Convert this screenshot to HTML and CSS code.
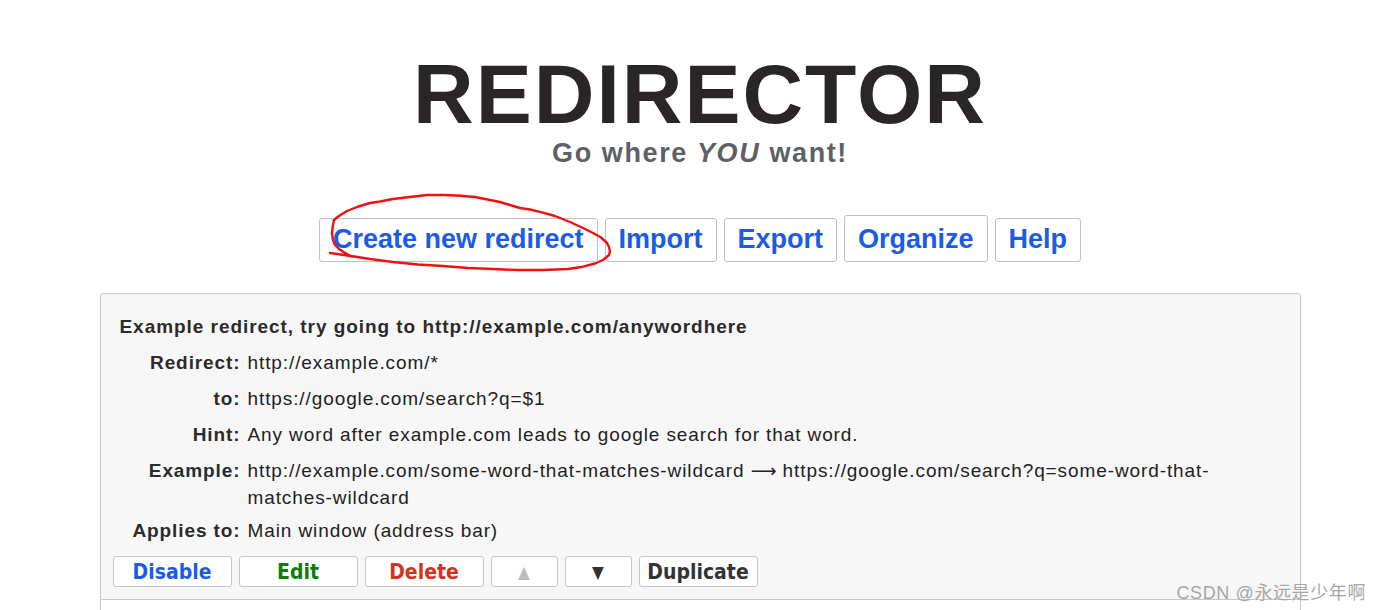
FILE: index.html
```html
<!DOCTYPE html>
<html lang="en">
<head>
	<meta charset="UTF-8">
	<title>Redirector</title>
	<link rel="stylesheet" href="styles.css">
</head>
<body>
	<header class="masthead">
		<h1 class="logo">REDIRECTOR</h1>
		<p class="tagline">Go where <em>YOU</em> want!</p>
	</header>

	<nav class="menu">
		<button class="menu-btn">Create new redirect</button>
		<button class="menu-btn">Import</button>
		<button class="menu-btn">Export</button>
		<button class="menu-btn menu-btn-raised">Organize</button>
		<button class="menu-btn">Help</button>
		<svg class="scribble" width="300" height="90" viewBox="0 0 300 90">
			<path d="M5,63 L26,66 45,69 68,72 93,74.5 118,76 143,78 168,79 193,80 218,80 243,79 258,76.7 270,73.5 278,70 284,65 285,61.7 284,57 282,53 276,47.5 268,43 258,38 245,32 230,26 218,22.7 205,19.5 195,18 185,15 175,12 165,10 150,7 135,5.7 120,5 102,5 85,7 68,9 55,11.5 45,13 32,17 22,21 14,26 9,30 8,35 7,43 8,50 10,55 14,59 18,61.7 27,66.7" />
		</svg>
	</nav>

	<ul class="redirects">
		<li class="redirect">
			<h2 class="redirect-title">Example redirect, try going to http://example.com/anywordhere</h2>
			<dl class="details">
				<dt>Redirect:</dt>
				<dd>http://example.com/*</dd>
				<dt>to:</dt>
				<dd>https://google.com/search?q=$1</dd>
				<dt>Hint:</dt>
				<dd>Any word after example.com leads to google search for that word.</dd>
				<dt>Example:</dt>
				<dd>http://example.com/some-word-that-matches-wildcard <span class="arrow">&#10230;</span> https://google.com/search?q=some-word-that-matches-wildcard</dd>
				<dt class="last">Applies to:</dt>
				<dd class="last">Main window (address bar)</dd>
			</dl>
			<div class="actions">
				<button class="act act-blue">Disable</button>
				<button class="act act-green">Edit</button>
				<button class="act act-red">Delete</button>
				<button class="act act-arrow act-off">&#9650;</button>
				<button class="act act-arrow">&#9660;</button>
				<button class="act">Duplicate</button>
			</div>
		</li>
		<li class="redirect redirect-plain"></li>
	</ul>

	<div class="watermark">CSDN @永远是少年啊</div>
</body>
</html>
```

FILE: styles.css
```css
*{margin: 0; padding: 0; box-sizing: border-box;}
li{list-style: none;}
html, body{height: 610px; overflow: hidden; background: #fff;}
body{margin: 0 0 0 16px; position: relative; font-family: "Liberation Sans", Arial, sans-serif; color: #222;}

.masthead{text-align: center;}
.logo{margin-top: 52px; font-size: 84px; line-height: 84px; letter-spacing: 2px; font-weight: bold; color: #2a2626;}
.tagline{margin-top: 2px; font-size: 27px; line-height: 31px; font-weight: bold; letter-spacing: 1.6px; color: #5d6064;}
.tagline em{font-style: italic;}

.menu{position: relative; margin-top: 46px; display: flex; justify-content: center; align-items: flex-end; gap: 7px;}
.menu-btn{font-family: inherit; font-size: 27px; line-height: 30px; font-weight: bold; color: #1b5be6; background: #fff; border: 1px solid #c2c2c2; border-radius: 3px; padding: 5px 13px 7px;}
.menu-btn-raised{padding-top: 8px;}
.scribble{position: absolute; left: 309px; top: -25px; overflow: visible; pointer-events: none;}
.scribble path{fill: none; stroke: #ee1111; stroke-width: 2.4; stroke-linejoin: round; stroke-linecap: round;}

.redirects{width: 1201px; margin: 31px auto 0;}
.redirect{background: #f7f7f7; border: 1px solid #c8c8c8; border-radius: 3px 3px 0 0; padding: 19px 40px 12px 12px;}
.redirect-plain{background: #fff; border-top: 0; border-radius: 0; height: 120px;}
.redirect-title{margin-left: 7px; font-size: 19px; line-height: 27px; font-weight: bold; letter-spacing: 0.95px; color: #2b2b2b;}

.details{margin: 9px 0 0 7px; display: grid; grid-template-columns: 121px 1fr; column-gap: 7px; row-gap: 9px; font-size: 19px; line-height: 27px; letter-spacing: 0.9px;}
.details dt{text-align: right; font-weight: bold; color: #2b2b2b;}
.details dd{color: #222;}
.details .last{margin-top: -3px;}
.arrow{font-family: "DejaVu Sans", sans-serif; font-size: 18px; letter-spacing: 0;}

.actions{margin-top: 12px; display: flex; gap: 7px;}
.act{width: 119px; height: 31px; font-family: "Liberation Sans Narrow", "DejaVu Sans Condensed", "DejaVu Sans", sans-serif; font-stretch: condensed; font-size: 21px; font-weight: bold; color: #333; background: #fff; border: 1px solid #c8c8c8; border-radius: 3px;}
.act-blue{color: #1b5be6;}
.act-green{color: #0a7d0a;}
.act-red{color: #d2321f;}
.act-arrow{width: 67px; font-family: "DejaVu Sans", sans-serif; font-size: 17px;}
.act-off{color: #bbb;}

.watermark{position: absolute; right: 18px; top: 578px; font-family: "Liberation Sans", "Noto Sans CJK SC", sans-serif; font-size: 18px; letter-spacing: 0.6px; color: #a6a6a6;}
```
